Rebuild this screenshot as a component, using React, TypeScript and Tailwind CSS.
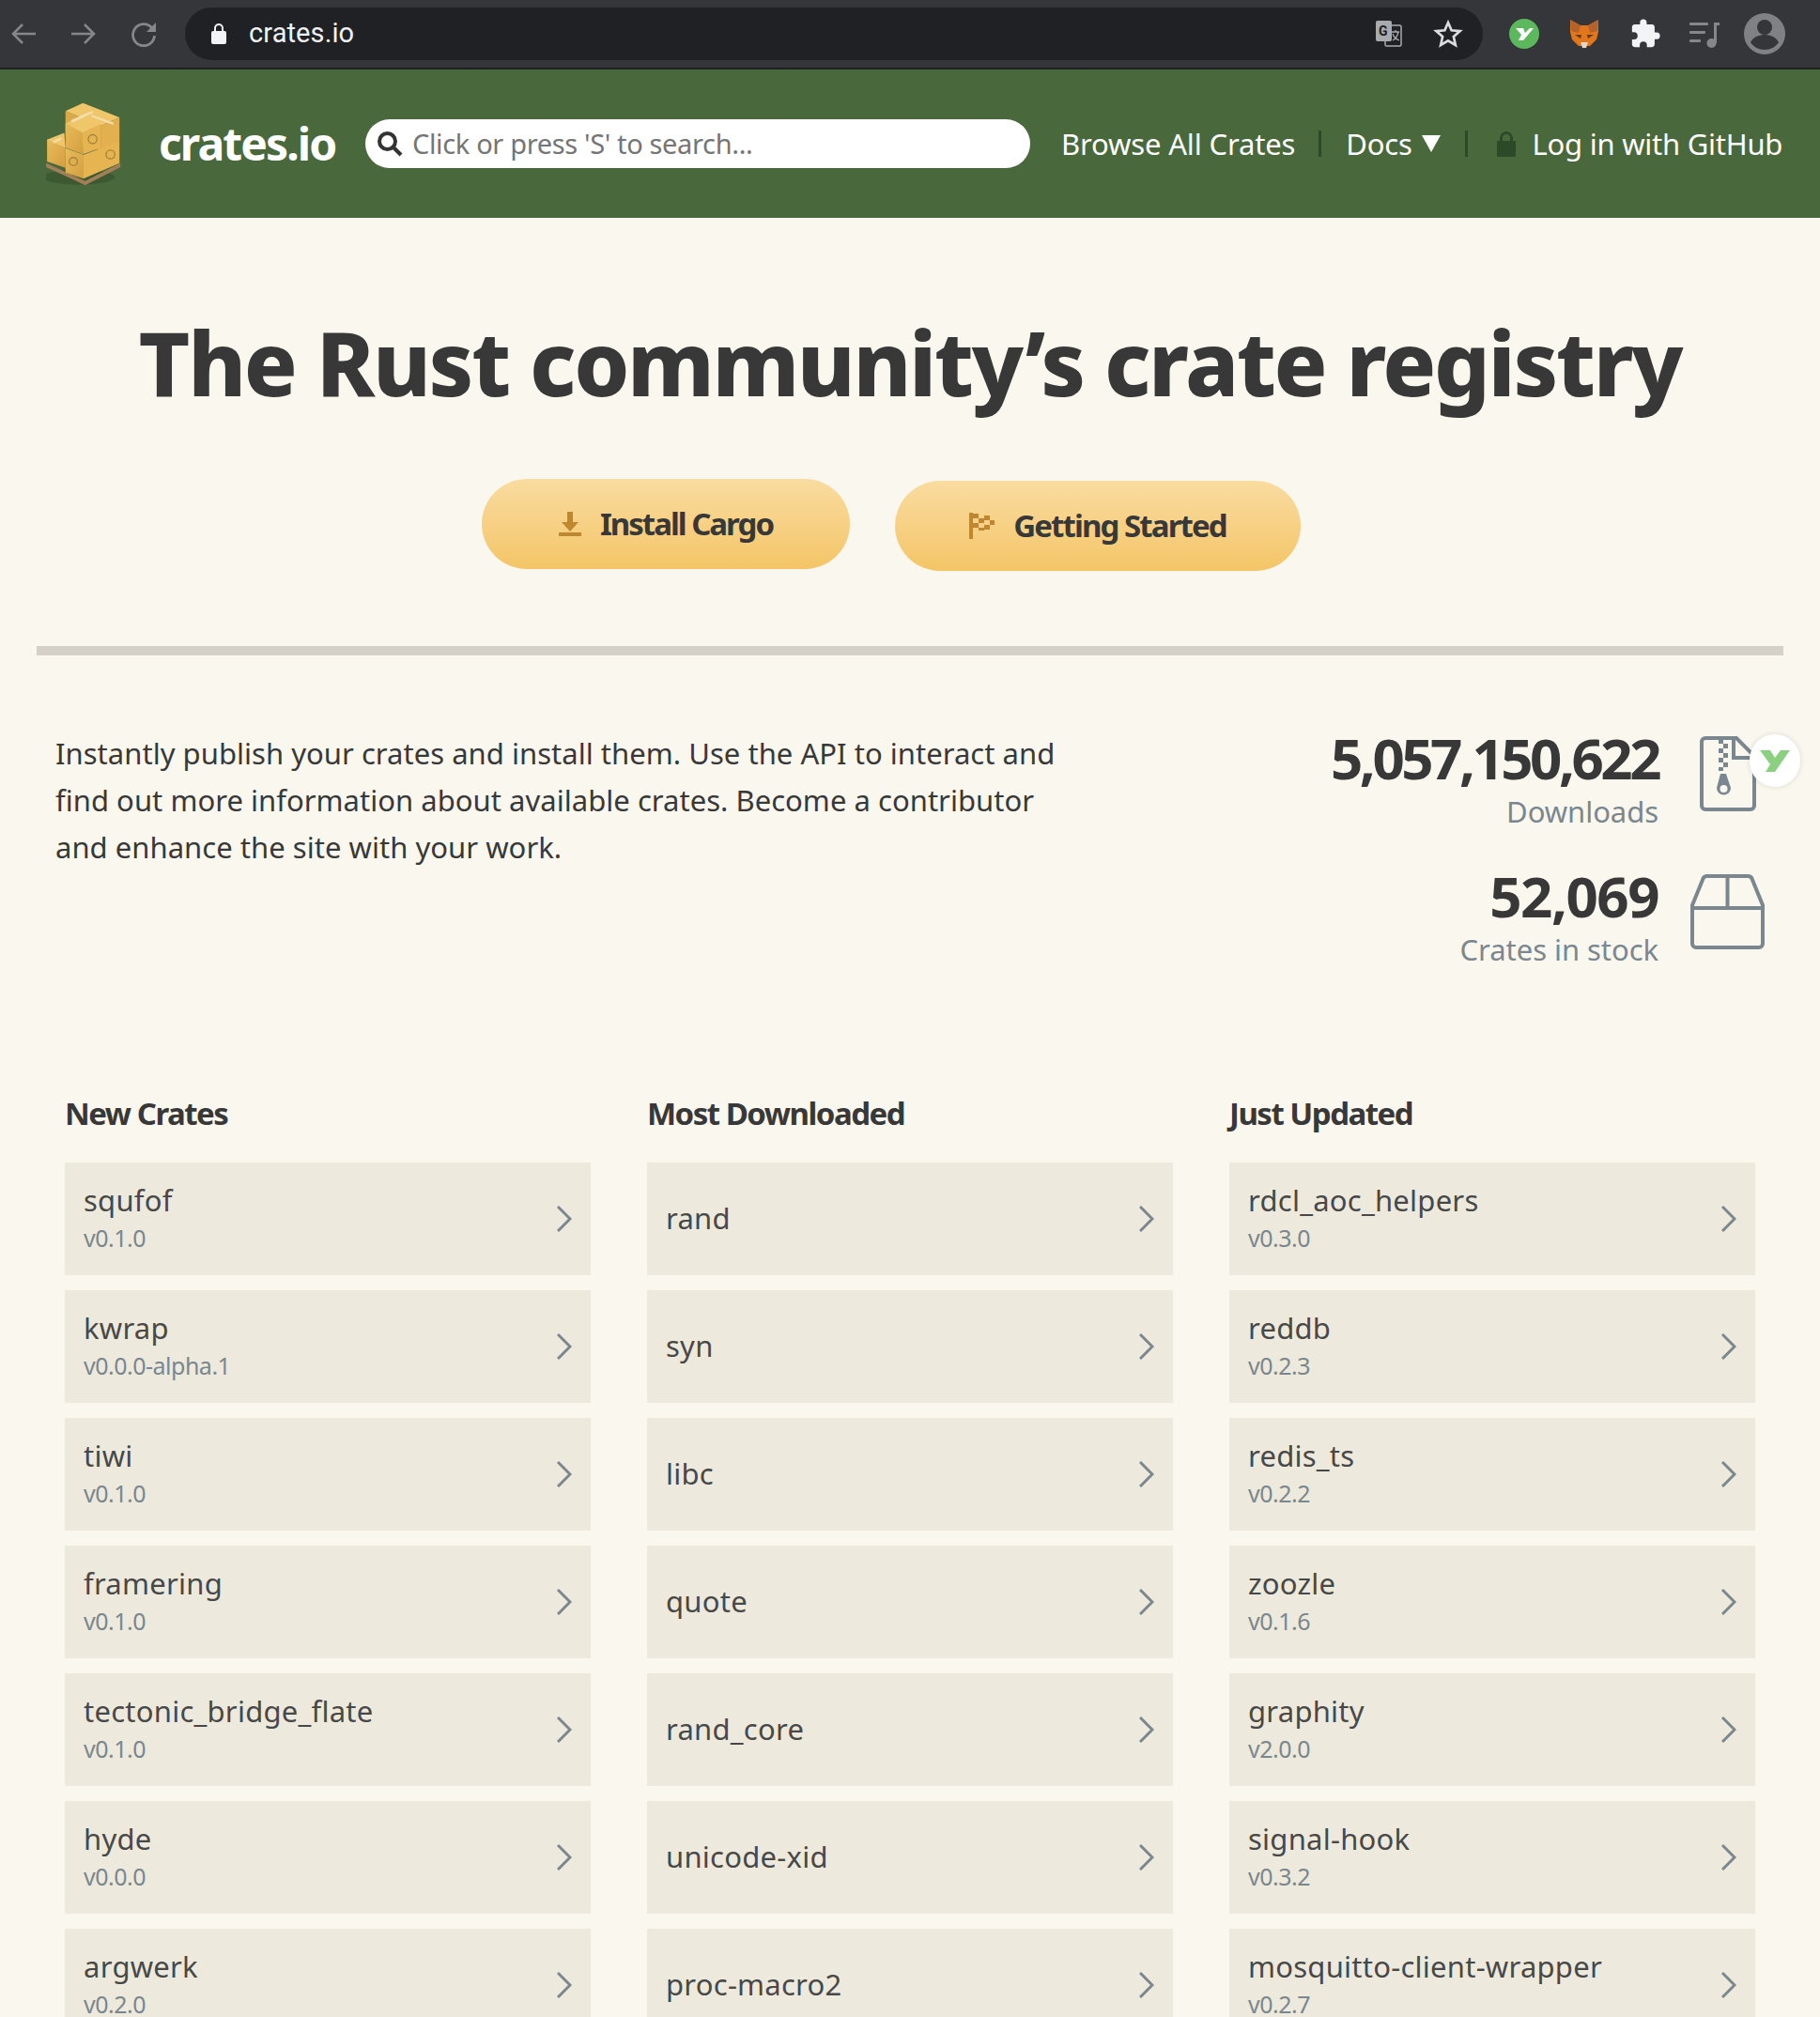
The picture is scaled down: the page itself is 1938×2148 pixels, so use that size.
const newCrates = [
  ['squfof', 'v0.1.0'],
  ['kwrap', 'v0.0.0-alpha.1'],
  ['tiwi', 'v0.1.0'],
  ['framering', 'v0.1.0'],
  ['tectonic_bridge_flate', 'v0.1.0'],
  ['hyde', 'v0.0.0'],
  ['argwerk', 'v0.2.0'],
]
const mostDownloaded = [['rand'], ['syn'], ['libc'], ['quote'], ['rand_core'], ['unicode-xid'], ['proc-macro2']]
const justUpdated = [
  ['rdcl_aoc_helpers', 'v0.3.0'],
  ['reddb', 'v0.2.3'],
  ['redis_ts', 'v0.2.2'],
  ['zoozle', 'v0.1.6'],
  ['graphity', 'v2.0.0'],
  ['signal-hook', 'v0.3.2'],
  ['mosquitto-client-wrapper', 'v0.2.7'],
]

function CrateLogo() {
  return (
    <svg viewBox="60 60 240 268" className="w-[80px] h-[89px]">
      <defs>
        <linearGradient id="boxSide" x1="0" y1="0" x2="1" y2="1">
          <stop offset="0" stopColor="#e9bb5a" />
          <stop offset="1" stopColor="#d39f40" />
        </linearGradient>
      </defs>
      <ellipse cx="165" cy="300" rx="115" ry="24" fill="#2f4a28" opacity="0.5" />
      <polygon points="60,255 185,312 298,255 298,268 185,326 160,314 60,268" fill="#a37f58" />
      <polygon points="122,88 178,62 295,108 237,135" fill="#efc76a" />
      <polygon points="237,135 295,108 295,185 237,215" fill="#e3b04f" />
      <polygon points="122,88 237,135 237,215 122,170" fill="#dca948" />
      <polygon points="122,128 190,100 235,130 176,158" fill="#efc76a" />
      <polygon points="122,128 176,158 178,226 122,205" fill="url(#boxSide)" />
      <polygon points="176,158 235,130 235,206 178,226" fill="#e6b552" />
      <polygon points="63,180 118,158 122,207 63,182" fill="#efc76a" />
      <polygon points="63,180 122,207 122,270 63,250" fill="url(#boxSide)" />
      <polygon points="122,207 180,228 180,305 122,285" fill="url(#boxSide)" />
      <polygon points="180,228 295,185 295,255 180,305" fill="#e6b552" />
      <polygon points="138,118 205,88 213,92 146,124" fill="#f3dfae" />
      <polygon points="205,100 275,125 275,132 205,106" fill="#f3dfae" />
      <polygon points="83,184 108,172 108,180 83,192" fill="#f3dfae" />
      <circle cx="209" cy="178" r="14" fill="none" stroke="#a58238" strokeWidth="4" />
      <circle cx="147" cy="250" r="13" fill="none" stroke="#a58238" strokeWidth="4" />
      <circle cx="266" cy="227" r="14" fill="none" stroke="#a58238" strokeWidth="4" />
    </svg>
  )
}

function ExtensionIcons() {
  return (
    <div className="flex items-center">
      <svg viewBox="0 0 32 32" className="w-[32px] h-[32px] ml-[28px]">
        <circle cx="16" cy="16" r="16" fill="#5cb85c" />
        <path d="M7 10h8l2 5 5-5h4l-11 13h-5l3-6z" fill="#ffffff" />
      </svg>
      <svg viewBox="0 0 32 32" className="w-[32px] h-[32px] ml-[32px]">
        <polygon points="1,1 12,7 20,7 31,1 31,14 29,22 22,29 10,29 3,22 1,14" fill="#e2761b" />
        <polygon points="1,1 12,7 10,15 2,13" fill="#b2622a" />
        <polygon points="31,1 20,7 22,15 30,13" fill="#b2622a" />
        <polygon points="12,25 20,25 18,31 14,31" fill="#e4d8ca" />
        <polygon points="6,17 13,17 12,21" fill="#5c3a1e" />
        <polygon points="26,17 19,17 20,21" fill="#5c3a1e" />
      </svg>
      <svg viewBox="0 0 24 24" className="w-[34px] h-[34px] ml-[32px]" fill="#f1f3f4">
        <path d="M20.5 11H19V7c0-1.1-.9-2-2-2h-4V3.5a2.5 2.5 0 0 0-5 0V5H4c-1.1 0-2 .9-2 2v3.8h1.5a2.7 2.7 0 0 1 0 5.4H2V20c0 1.1.9 2 2 2h3.8v-1.500a2.700 2.700 0 0 1 5.400 0V22H17c1.100 0 2-.9 2-2v-4h1.500a2.500 2.500 0 0 0 0-5z" />
      </svg>
      <svg viewBox="0 0 32 32" className="w-[32px] h-[32px] ml-[30px]" fill="#85878a">
        <rect x="0" y="4" width="20" height="3" rx="1" />
        <rect x="0" y="13" width="17" height="3" rx="1" />
        <rect x="0" y="22" width="12" height="3" rx="1" />
        <rect x="26" y="4" width="3" height="22" />
        <rect x="26" y="4" width="6" height="3" />
        <circle cx="23.500" cy="26" r="5" />
      </svg>
      <svg viewBox="0 0 44 44" className="w-[44px] h-[44px] ml-[26px]">
        <circle cx="22" cy="22" r="22" fill="#7f8185" />
        <circle cx="22" cy="15" r="8" fill="#35363a" />
        <path d="M7 31c3-6 10-8 15-8s12 2 15 8c-3 5-9 8-15 8s-12-3-15-8z" fill="#35363a" />
      </svg>
    </div>
  )
}

function BrowserChrome() {
  return (
    <div className="h-[74px] bg-[#35363a] border-b-2 border-[#202124] flex items-center font-['Roboto',sans-serif]">
      <svg viewBox="0 0 28 24" className="w-[28px] h-[24px] ml-[11px]" fill="none" stroke="#85878a" strokeWidth="2.500">
        <path d="M27 12H3M13 2 3 12l10 10" />
      </svg>
      <svg viewBox="0 0 28 24" className="w-[28px] h-[24px] ml-[36px]" fill="none" stroke="#85878a" strokeWidth="2.500">
        <path d="M1 12h24M15 2l10 10-10 10" />
      </svg>
      <svg viewBox="0 0 28 28" className="w-[28px] h-[28px] ml-[36px]" fill="none">
        <path d="M23 8a11.500 11.500 0 1 0 2.500 8" stroke="#85878a" strokeWidth="2.800" />
        <path d="M27 2v10H17z" fill="#85878a" />
      </svg>
      <div className="ml-[30px] w-[1382px] h-[56px] bg-[#202124] rounded-full flex items-center pl-[28px] pr-[21px]">
        <svg viewBox="0 0 16 24" className="w-[16px] h-[24px]" fill="#f1f3f4">
          <path d="M3 9V6a5 5 0 0 1 10 0v3h-2V6a3 3 0 0 0-6 0v3z" />
          <rect x="0" y="9" width="16" height="14" rx="2" />
        </svg>
        <span className="ml-[24px] text-[29px] tracking-[0.1px] text-[#f1f3f4]">crates.io</span>
        <div className="ml-auto flex items-center">
          <svg viewBox="0 0 28 28" className="w-[28px] h-[28px]">
            <rect x="10" y="5" width="17" height="22" rx="1.500" fill="none" stroke="#a8abae" strokeWidth="1.500" />
            <rect x="0" y="0" width="17" height="22" rx="2" fill="#a8abae" />
            <text x="3" y="16" fontSize="14" fontWeight="700" fill="#202124" fontFamily="Roboto, sans-serif">G</text>
            <path d="M17 12h8M21 10v2M24 12c-1 5-4 8-6 9M18 14c1 3 4 6 7 7" stroke="#a8abae" strokeWidth="1.300" fill="none" />
          </svg>
          <svg viewBox="0 0 24 24" className="w-[32px] h-[32px] ml-[33px]" fill="none" stroke="#dadce0" strokeWidth="2">
            <path d="m12 3 2.700 6.200 6.800.6-5.100 4.500 1.500 6.700L12 17.500 6.100 21l1.500-6.700-5.100-4.500 6.800-.6z" />
          </svg>
        </div>
      </div>
      <ExtensionIcons />
    </div>
  )
}

function NavBar() {
  return (
    <header className="h-[158px] bg-[#49693d] flex items-center pl-[49px] text-white">
      <CrateLogo />
      <span className="ml-[40px] text-[48px] font-bold tracking-[-1.9px] font-['Noto_Sans',sans-serif] w-[189px]">crates.io</span>
      <div className="ml-[31px] w-[708px] h-[52px] bg-white rounded-full flex items-center pl-[12px]">
        <svg viewBox="0 0 28 28" className="w-[28px] h-[28px]" fill="none" stroke="#333333" strokeWidth="4">
          <circle cx="11.500" cy="11.500" r="8.500" />
          <path d="m18 18 8 8" />
        </svg>
        <span className="ml-[10px] text-[29px] tracking-[-0.35px] text-[#757575]">Click or press 'S' to search...</span>
      </div>
      <span className="ml-[33px] text-[31px] tracking-[-0.15px] whitespace-nowrap">Browse All Crates</span>
      <div className="ml-[25px] w-[3px] h-[28px] bg-[#2c4a28]" />
      <span className="ml-[26px] text-[31px] tracking-[-0.2px]">Docs</span>
      <svg viewBox="0 0 20 20" className="w-[20px] h-[20px] ml-[10px]" fill="#ffffff">
        <path d="M0 1h20L10 19z" />
      </svg>
      <div className="ml-[26px] w-[3px] h-[28px] bg-[#2c4a28]" />
      <svg viewBox="0 0 20 28" className="w-[20px] h-[28px] ml-[31px]" fill="#2c4a28">
        <path d="M3 12V8a7 7 0 0 1 14 0v4h-3V8a4 4 0 0 0-8 0v4z" />
        <rect x="0" y="11" width="20" height="17" rx="1" />
      </svg>
      <span className="ml-[18px] text-[31px] tracking-[-0.25px] whitespace-nowrap">Log in with GitHub</span>
    </header>
  )
}

function Hero() {
  return (
    <section>
      <h1 className="pt-[90px] text-center text-[94px] leading-[128px] font-extrabold text-[#383838] tracking-[-2.3px] whitespace-nowrap">
        The Rust community’s crate registry
      </h1>
      <div className="mt-[60px] flex items-start justify-center gap-[48px] pr-[40px]">
        <a className="w-[392px] h-[96px] rounded-full bg-gradient-to-b from-[#f9dca0] to-[#f4c566] flex items-center justify-center">
          <svg viewBox="0 0 24 26" className="w-[24px] h-[26px]" fill="#bf872f">
            <path d="M9 0h6v11h6l-9 10-9-10h6z" />
            <rect x="0" y="22" width="24" height="4" />
          </svg>
          <span className="ml-[20px] text-[33px] font-bold tracking-[-2px] text-[#383838]">Install Cargo</span>
        </a>
        <a className="mt-[2px] w-[432px] h-[96px] rounded-full bg-gradient-to-b from-[#f9dca0] to-[#f4c566] flex items-center justify-center">
          <svg viewBox="0 0 27 28" className="w-[27px] h-[28px]" fill="#bf872f">
            <rect x="0" y="0" width="4" height="28" />
            <path d="M4 1h6v5H4zM16 3h6v5h-6zM10 6h6v5h-6zM22 8h5v5h-5zM4 11h6v5H4zM16 13h6v5h-6zM10 16h6v3h-6z" />
          </svg>
          <span className="ml-[20px] text-[33px] font-bold tracking-[-1.9px] text-[#383838]">Getting Started</span>
        </a>
      </div>
      <div className="mt-[80px] mx-[39px] h-[10px] bg-[#d5d1c9]" />
    </section>
  )
}

function Stat({ value, valueClass, label, icon }: { value: string; valueClass: string; label: string; icon: React.ReactNode }) {
  return (
    <div className="flex items-start justify-end">
      <div className="text-right">
        <div className={valueClass}>{value}</div>
        <div className="mt-[3px] text-[31px] leading-[38px] tracking-[-0.05px] text-[#7b878e]">{label}</div>
      </div>
      <div className="ml-[34px] mt-[12px] w-[79px] flex justify-center">{icon}</div>
    </div>
  )
}

function Stats() {
  return (
    <section className="relative mt-[74px] pl-[59px] pr-[59px] flex justify-between">
      <p className="w-[1100px] pt-[5px] text-[31px] leading-[50px] tracking-[0.03px] text-[#383838]">
        Instantly publish your crates and install them. Use the API to interact and
        <br />
        find out more information about available crates. Become a contributor
        <br />
        and enhance the site with your work.
      </p>
      <div className="flex flex-col gap-[36px]">
        <Stat
          value="5,057,150,622"
          valueClass="text-[60px] leading-[70px] font-bold tracking-[-3.5px] text-[#383838]"
          label="Downloads"
          icon={
            <svg viewBox="0 0 60 80" className="w-[60px] h-[80px]" fill="none" stroke="#7b878e" strokeWidth="4">
              <path d="M6 2h33l19 19v53a4 4 0 0 1-4 4H6a4 4 0 0 1-4-4V6a4 4 0 0 1 4-4z" />
              <path d="M36 2v21h22" />
              <path d="M20 3h5v5h-5zM25 8h5v5h-5zM20 13h5v5h-5zM25 18h5v5h-5zM20 23h5v5h-5zM25 28h5v5h-5zM20 33h5v4h-5z" fill="#7b878e" stroke="none" />
              <path d="M22 40h6l5 15a7.500 7.500 0 1 1-15 0z" fill="#7b878e" stroke="none" />
              <circle cx="25.500" cy="56" r="4" fill="#f9f7ee" stroke="none" />
            </svg>
          }
        />
        <Stat
          value="52,069"
          valueClass="text-[60px] leading-[70px] font-bold tracking-[-1.5px] text-[#383838]"
          label="Crates in stock"
          icon={
            <svg viewBox="0 0 79 80" className="w-[79px] h-[80px]" fill="none" stroke="#7b878e" strokeWidth="4">
              <path d="M2 33 13 6a5 5 0 0 1 4-4h45a5 5 0 0 1 4 4l11 27v41a4 4 0 0 1-4 4H6a4 4 0 0 1-4-4z" />
              <path d="M2 36h75M39.500 2v34" />
            </svg>
          }
        />
      </div>
      {/* floating yomi button sits on top of the zip icon */}
      <div className="absolute right-[21px] top-[10px] w-[54px] h-[56px] rounded-full bg-white shadow-[0_0_6px_rgba(0,0,0,0.12)] flex items-center justify-center">
        <svg viewBox="0 0 32 24" className="w-[32px] h-[24px]" fill="#8bcf80">
          <path d="M0 1h11l5 8 6-8h10L16 24H6l5-8z" />
        </svg>
      </div>
    </section>
  )
}

function CrateRow({ name, version }: { name: string; version?: string }) {
  return (
    <a className="h-[120px] bg-[#edeadd] flex items-center justify-between pl-[20px] pr-[20px]">
      <div>
        <div className="mb-[2px] text-[31px] leading-[38px] tracking-[0.25px] text-[#484848]">{name}</div>
        {version && <div className="text-[25px] leading-[38px] tracking-[-0.5px] text-[#7b878e]">{version}</div>}
      </div>
      <svg viewBox="0 0 16 28" className="w-[16px] h-[28px]" fill="none" stroke="#7b878e" strokeWidth="3">
        <path d="m1 1 13 13L1 27" />
      </svg>
    </a>
  )
}

function CrateList({ title, rows }: { title: string; rows: string[][] }) {
  return (
    <div>
      <h2 className="text-[33px] leading-[40px] font-bold tracking-[-1.5px] text-[#383838]">{title}</h2>
      <div className="mt-[32px] flex flex-col gap-[16px]">
        {rows.map(r => (
          <CrateRow key={r[0]} name={r[0]} version={r[1]} />
        ))}
      </div>
    </div>
  )
}

export default function App() {
  return (
    <div className="h-[2148px] overflow-hidden bg-[#f9f7ee] font-['Noto_Sans',sans-serif]">
      <BrowserChrome />
      <NavBar />
      <Hero />
      <Stats />
      <div className="mt-[136px] ml-[69px] mr-[69px] grid grid-cols-3 gap-[60px]">
        <CrateList title="New Crates" rows={newCrates} />
        <CrateList title="Most Downloaded" rows={mostDownloaded} />
        <CrateList title="Just Updated" rows={justUpdated} />
      </div>
    </div>
  )
}
